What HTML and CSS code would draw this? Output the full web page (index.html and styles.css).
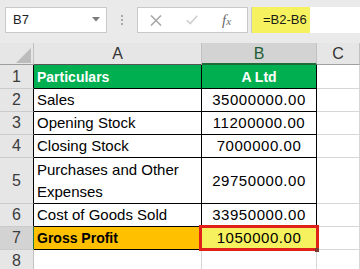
FILE: index.html
```html
<!DOCTYPE html>
<html lang="en">
<head>
<meta charset="utf-8">
<title>Gross Profit</title>
<link rel="stylesheet" href="styles.css">
</head>
<body>
<div class="app">
  <div class="formula-bar">
    <div class="name-box">
      <span class="name-text">B7</span>
      <svg class="caret" width="8" height="5" viewBox="0 0 8 5"><path d="M0 0H8L4 4.5Z" fill="#7b7b7b"/></svg>
    </div>
    <div class="grip"><i></i><i></i><i></i></div>
    <div class="fx-tools">
      <svg class="tool-x" width="12" height="11" viewBox="0 0 12 11"><path d="M1 0.5L11 10.5M11 0.5L1 10.5" stroke="#a9a9a9" stroke-width="1.6" fill="none"/></svg>
      <svg class="tool-check" width="12" height="10" viewBox="0 0 12 10"><path d="M0.8 5.2L4.3 8.6L11.2 0.8" stroke="#cfcfcf" stroke-width="1.6" fill="none"/></svg>
      <span class="fx">f<span class="fx-sub">x</span></span>
    </div>
    <div class="formula"><span class="formula-text">=B2-B6</span></div>
  </div>

  <div class="sheet">
    <div class="corner"><span class="corner-tri"></span></div>
    <div class="col-head">A</div>
    <div class="col-head col-sel">B</div>
    <div class="col-head col-last">C</div>

    <div class="row-head">1</div>
    <div class="cell label head-fill">Particulars</div>
    <div class="cell value head-fill">A Ltd</div>
    <div class="cell blank"></div>

    <div class="row-head">2</div>
    <div class="cell label">Sales</div>
    <div class="cell value">35000000.00</div>
    <div class="cell blank"></div>

    <div class="row-head">3</div>
    <div class="cell label">Opening Stock</div>
    <div class="cell value">11200000.00</div>
    <div class="cell blank"></div>

    <div class="row-head">4</div>
    <div class="cell label">Closing Stock</div>
    <div class="cell value">7000000.00</div>
    <div class="cell blank"></div>

    <div class="row-head">5</div>
    <div class="cell label wrap">Purchases and Other Expenses</div>
    <div class="cell value">29750000.00</div>
    <div class="cell blank"></div>

    <div class="row-head">6</div>
    <div class="cell label">Cost of Goods Sold</div>
    <div class="cell value">33950000.00</div>
    <div class="cell blank"></div>

    <div class="row-head row-sel">7</div>
    <div class="cell label total">Gross Profit</div>
    <div class="cell value active">1050000.00</div>
    <div class="cell blank"></div>

    <div class="row-head row-out">8</div>
    <div class="cell out"></div>
    <div class="cell out"></div>
    <div class="cell blank"></div>
  </div>
</div>
</body>
</html>
```

FILE: styles.css
```css
* {
  box-sizing: border-box;
}

html, body {
  margin: 0;
  padding: 0;
  background: #ffffff;
}

body {
  font-family: "Liberation Sans", Arial, sans-serif;
  color: #000;
}

.app {
  width: 360px;
  height: 269px;
  overflow: hidden;
  background: #ffffff;
}

/* ---------- formula bar ---------- */
.formula-bar {
  height: 43px;
  background: #eaeaea;
  display: flex;
  align-items: flex-start;
  padding-top: 7px;
}

.name-box {
  margin-left: 5px;
  width: 102px;
  height: 26px;
  background: #fff;
  border: 1px solid #c9c9c9;
  display: flex;
  align-items: center;
  justify-content: space-between;
  padding: 0 6px 1px 7px;
}

.name-text {
  font-size: 13px;
  color: #222;
}

.caret {
  display: block;
}

.grip {
  width: 30px;
  height: 26px;
  display: flex;
  flex-direction: column;
  align-items: center;
  justify-content: center;
  gap: 2px;
}

.grip i {
  display: block;
  width: 2px;
  height: 2px;
  background: #a8a8a8;
}

.fx-tools {
  width: 111px;
  height: 26px;
  background: #fff;
  border: 1px solid #c9c9c9;
  display: flex;
  align-items: center;
  padding-left: 12px;
}

.tool-x {
  display: block;
}

.tool-check {
  display: block;
  margin-left: 24px;
}

.fx {
  margin-left: 24px;
  font-family: "Liberation Serif", "Times New Roman", serif;
  font-style: italic;
  font-size: 15px;
  color: #6a6a6a;
  line-height: 1;
}

.fx-sub {
  font-size: 11px;
}

.formula {
  margin-left: 3px;
  flex: 1;
  height: 26px;
  background: #fff;
  border-left: 1px solid #c9c9c9;
  display: flex;
}

.formula-text {
  width: 58px;
  height: 26px;
  background: #f6f15e;
  font-size: 13px;
  color: #1a1a1a;
  line-height: 26px;
  padding-left: 11px;
}

/* ---------- worksheet grid ---------- */
.sheet {
  display: grid;
  grid-template-columns: 34px 168px 115px 1fr;
  grid-template-rows: 22px 24px 23px 23px 23px 46px 23px 23px 23px;
}

.sheet > div {
  border-right: 1px solid #d6d6d6;
  border-bottom: 1px solid #d6d6d6;
}

.corner {
  position: relative;
  background: #e6e6e6;
  border-right-color: #c2c2c2 !important;
  border-bottom-color: #9e9e9e !important;
}

.corner-tri {
  position: absolute;
  right: 2px;
  bottom: 1px;
  width: 0;
  height: 0;
  border-left: 15px solid transparent;
  border-bottom: 15px solid #bcbcbc;
}

.col-head {
  background: #e6e6e6;
  border-right-color: #c2c2c2 !important;
  border-bottom-color: #555 !important;
  font-size: 16px;
  color: #333;
  display: flex;
  align-items: center;
  justify-content: center;
  padding-top: 1px;
}

.col-sel {
  background: #d3d3d3;
  color: #215e36;
  border-bottom: 2px solid #1e6b3c !important;
}

.col-last {
  border-bottom-color: #a0a0a0 !important;
}

.row-head {
  background: #e6e6e6;
  border-bottom-color: #cbcbcb !important;
  border-right-color: #000 !important;
  font-size: 16px;
  color: #3c3c3c;
  display: flex;
  align-items: center;
  justify-content: center;
  line-height: 22px;
}

.row-sel {
  background: #d3d3d3;
  border-right: 1px solid #217346 !important;
}

.row-out {
  border-right-color: #c2c2c2 !important;
}

.cell {
  font-size: 15px;
  line-height: 22px;
  display: flex;
  align-items: center;
}

.label,
.value {
  border-right-color: #000 !important;
  border-bottom-color: #000 !important;
}

.label {
  padding-left: 3px;
}

.value {
  justify-content: center;
  letter-spacing: 0.55px;
}

.head-fill {
  background: #00b050;
  color: #fff;
  font-weight: bold;
  font-size: 14px;
  letter-spacing: 0;
}

.total {
  background: #ffc000;
  font-weight: bold;
  font-size: 14px;
}

.active {
  position: relative;
  background: #f6f15e;
}

/* selection outline around the active cell */
.active::after {
  content: "";
  position: absolute;
  top: -2px;
  left: -3px;
  right: -3px;
  bottom: -2px;
  border: 3px solid #e0211b;
}

/* fill handle */
.active::before {
  content: "";
  position: absolute;
  right: -3px;
  bottom: -3px;
  width: 4px;
  height: 4px;
  background: #7a3b2e;
  z-index: 1;
}

.out {
  border-right-color: #d6d6d6;
}
```
